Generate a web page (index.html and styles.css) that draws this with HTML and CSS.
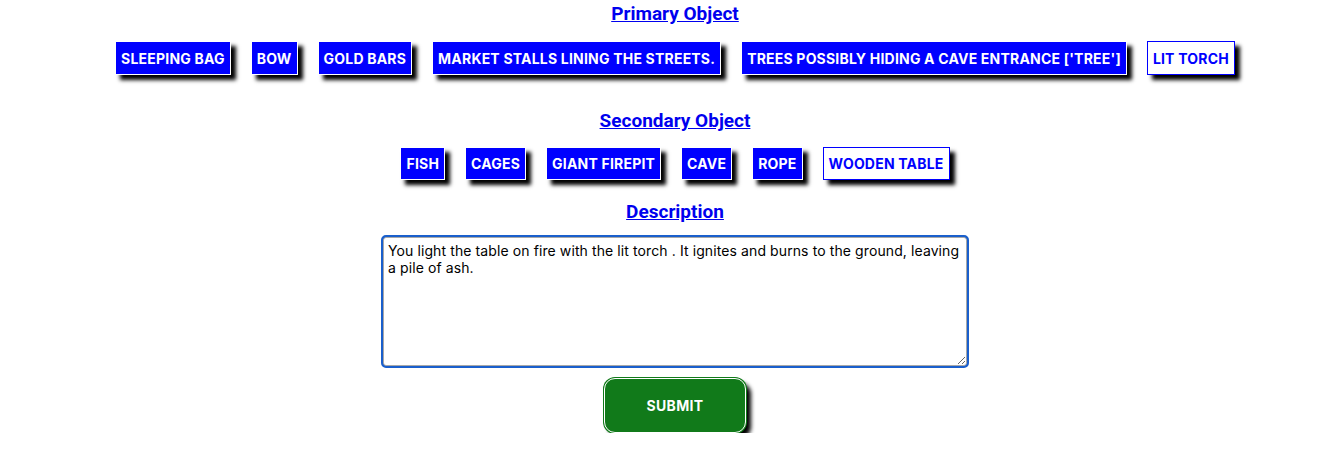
FILE: index.html
```html
<!DOCTYPE html>
<html>
<head>
<meta charset="utf-8">
<link rel="stylesheet" href="styles.css">
</head>
<body>
<main class="page">
  <h2 class="heading"><a href="#">Primary Object</a></h2>
  <div class="chips">
    <button class="chip">Sleeping Bag</button>
    <button class="chip">Bow</button>
    <button class="chip">Gold Bars</button>
    <button class="chip">Market stalls lining the streets.</button>
    <button class="chip">Trees possibly hiding a cave entrance ['tree']</button>
    <button class="chip selected">Lit Torch</button>
  </div>
  <h2 class="heading heading-2"><a href="#">Secondary Object</a></h2>
  <div class="chips chips-2">
    <button class="chip">Fish</button>
    <button class="chip">Cages</button>
    <button class="chip">Giant Firepit</button>
    <button class="chip">Cave</button>
    <button class="chip">Rope</button>
    <button class="chip selected">Wooden Table</button>
  </div>
  <h2 class="heading heading-3"><a href="#">Description</a></h2>
  <textarea class="desc">You light the table on fire with the lit torch . It ignites and burns to the ground, leaving a pile of ash.</textarea>
  <button class="submit">SUBMIT</button>
</main>
</body>
</html>
```

FILE: styles.css
```css
html, body {
  margin: 0;
  padding: 0;
  background: #ffffff;
}
.page {
  display: flex;
  flex-direction: column;
  align-items: center;
  padding-left: 17px;
  font-family: Roboto, "Liberation Sans", sans-serif;
}
.heading {
  margin: 2px 0 0 0;
  font-size: 19px;
  line-height: 23px;
  font-weight: 700;
}
.heading a {
  color: #0000ee;
  text-decoration: underline;
}
.heading-2 { margin-top: 34px; }
.heading-3 { margin-top: 20px; }
.chips {
  display: flex;
  gap: 20px;
  margin-top: 16px;
}
.chips-2 { margin-top: 15px; }
.chip {
  font-family: Inter, "Noto Sans", sans-serif;
  font-size: 14px;
  font-weight: 700;
  text-transform: uppercase;
  letter-spacing: 0.2px;
  color: #ffffff;
  background: #0000ff;
  border: 1px solid #ffffff;
  padding: 0 5px;
  height: 34px;
  box-shadow: 5px 5px 4px #000000;
  cursor: pointer;
}
.chips-2 .chip { height: 33px; }
.chip.selected {
  background: #ffffff;
  color: #0000ff;
  border-color: #0000ff;
}
.desc {
  margin-top: 14px;
  width: 584px;
  height: 129px;
  box-sizing: border-box;
  font-family: Inter, "Liberation Sans", sans-serif;
  font-size: 14px;
  line-height: 17px;
  letter-spacing: 0.1px;
  color: #000;
  padding: 4px 4px;
  border: 1px solid #a8a8a8;
  border-radius: 3px;
  outline: 2px solid #1a5fcc;
  outline-offset: 0;
  box-shadow: 0 0 0 1px #1a5fcc;
  resize: both;
}
.submit {
  margin-top: 12px;
  width: 142px;
  height: 55px;
  background: #117a1a;
  color: #ffffff;
  font-family: Inter, "Noto Sans", sans-serif;
  font-size: 14px;
  font-weight: 700;
  letter-spacing: 0.3px;
  border: 1px solid #ffffff;
  border-radius: 11px;
  box-shadow: 0 0 0 1px #117a1a, 5px 5px 4px #000000;
  cursor: pointer;
}
```
